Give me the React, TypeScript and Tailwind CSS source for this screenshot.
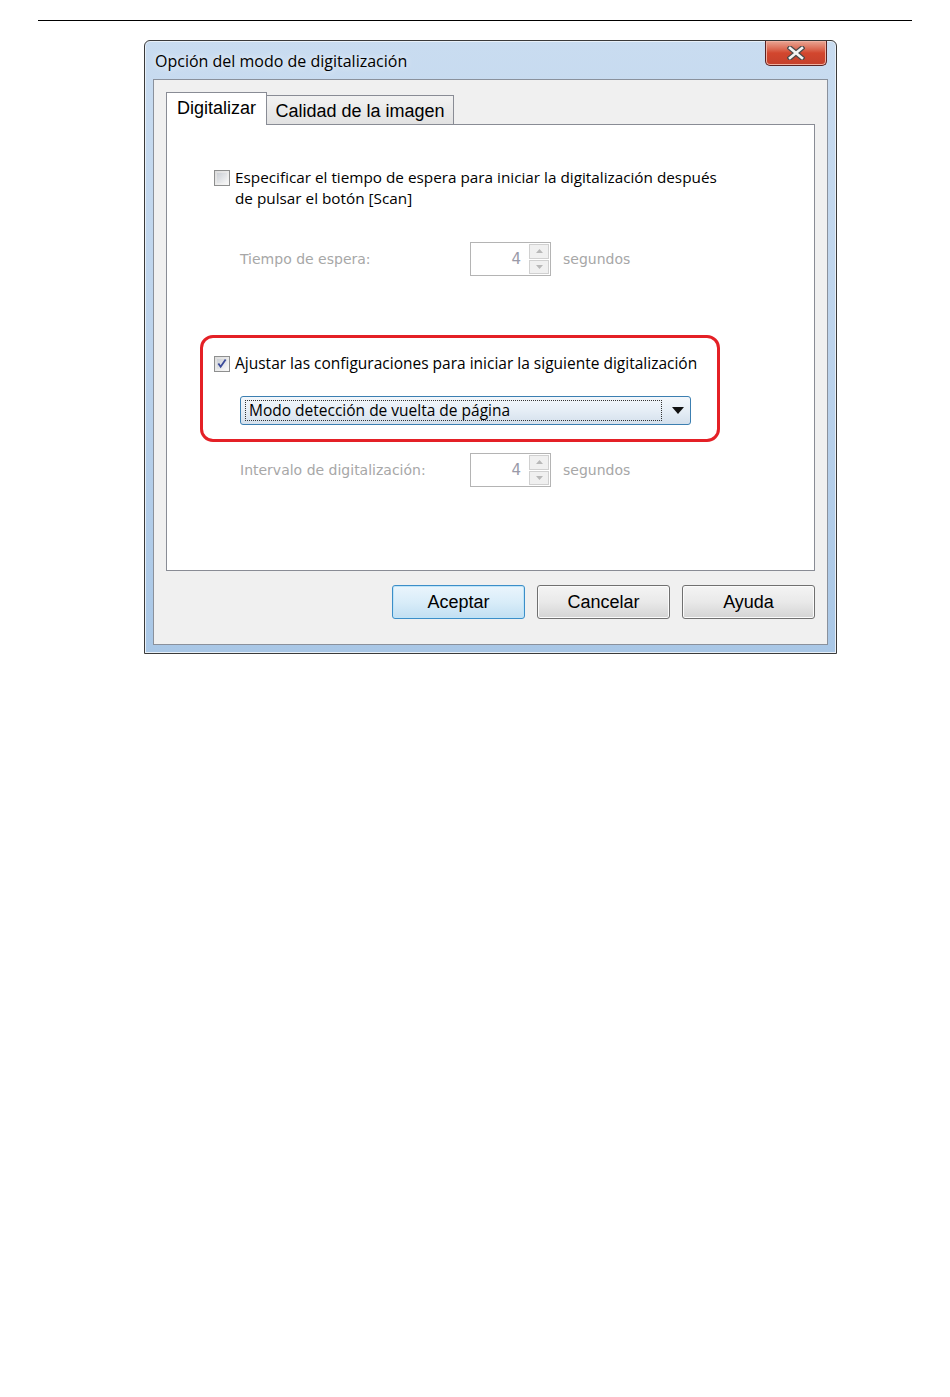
import { ReactNode } from "react"

const ui = { fontFamily: '"Open Sans", "Noto Sans", sans-serif' }
const dim = { fontFamily: '"DejaVu Sans", "Noto Sans", sans-serif' }
const classic = { fontFamily: '"Liberation Sans", Arial, sans-serif' }

function Checkbox({ checked }: { checked?: boolean }) {
  return (
    <div className="w-[16px] h-[16px] shrink-0 border border-[#8e8f8f] bg-gradient-to-br from-[#dcdcdc] to-[#f8f8f8] p-[2px]">
      <div className="w-full h-full bg-gradient-to-br from-[#cbcfd5] to-[#f6f6f6] flex items-center justify-center">
        {checked && (
          <svg width="11" height="11" viewBox="0 0 11 11">
            <path d="M1.5 5.5 L4 9 L9.5 1" fill="none" stroke="#3a4a9a" strokeWidth="2" />
          </svg>
        )}
      </div>
    </div>
  )
}

function Spinner() {
  return (
    <div className="w-[81px] h-[34px] border border-[#b4b4b4] bg-white flex items-center">
      <div className="flex-1 text-right pr-[8px] text-[15px] text-[#9a9aa8]" style={dim}>4</div>
      <div className="w-[20px] h-[30px] mr-[1px] flex flex-col gap-[1px]">
        <div className="flex-1 border border-[#d0d0d0] bg-[#f0f0f0] flex items-center justify-center">
          <svg width="7" height="4" viewBox="0 0 7 4"><path d="M0 4 L3.5 0 L7 4 Z" fill="#b8b8b8" /></svg>
        </div>
        <div className="flex-1 border border-[#d0d0d0] bg-[#f0f0f0] flex items-center justify-center">
          <svg width="7" height="4" viewBox="0 0 7 4"><path d="M0 0 L3.5 4 L7 0 Z" fill="#b8b8b8" /></svg>
        </div>
      </div>
    </div>
  )
}

function SpinRow({ label, className }: { label: string; className?: string }) {
  return (
    <div className={`flex items-center ${className ?? ""}`}>
      <div className="w-[230px] text-[14px] text-[#a7a7a7]" style={dim}>{label}</div>
      <Spinner />
      <div className="ml-[12px] text-[14px] text-[#a7a7a7]" style={dim}>segundos</div>
    </div>
  )
}

function Button({ children, primary }: { children: ReactNode; primary?: boolean }) {
  return (
    <div
      className={`w-[133px] h-[34px] rounded-[3px] border flex items-center justify-center text-[18px] text-black ${
        primary
          ? "border-[#3c8ec8] bg-gradient-to-b from-[#eaf5fc] via-[#d9edf9] to-[#c2dff2] shadow-[inset_0_0_0_1px_#bfe4f8]"
          : "border-[#707070] bg-gradient-to-b from-[#f4f4f4] via-[#e9e9e9] to-[#d4d4d4] shadow-[inset_0_0_0_1px_#fbfbfb]"
      }`}
      style={classic}
    >
      {children}
    </div>
  )
}

export default function App() {
  return (
    <div className="min-h-screen bg-white pt-[20px]">
      <div className="mx-[38px] h-[1px] bg-black" />

      {/* Dialog window */}
      <div className="ml-[144px] mt-[19px] w-[693px] h-[614px] border border-[#3a3a3a] rounded-t-[6px] bg-gradient-to-b from-[#c9dcf0] via-[#bcd3ec] to-[#a9c7e6] flex flex-col shadow-[inset_0_0_0_1px_#e8f0f8]">
        {/* Title bar */}
        <div className="h-[38px] flex items-start justify-between pl-[10px] pr-[9px]">
          <div className="pt-[8px] text-[16px] text-black [text-shadow:0_0_6px_#ffffff]" style={ui}>
            Opción del modo de digitalización
          </div>
          <div className="w-[62px] h-[25px] rounded-b-[5px] border border-[#5a2323] border-t-0 bg-gradient-to-b from-[#e8a594] via-[#d2462e] to-[#c4402c] flex items-center justify-center shadow-[inset_0_0_0_1px_#f0b0a0]">
            <svg width="18" height="14" viewBox="0 0 18 14">
              <path d="M3 2 L15 12 M15 2 L3 12" stroke="#4a4a4a" strokeWidth="5" strokeLinecap="square" />
              <path d="M3 2 L15 12 M15 2 L3 12" stroke="#f4f4f4" strokeWidth="2.6" strokeLinecap="square" />
            </svg>
          </div>
        </div>

        {/* Client area */}
        <div className="mx-[8px] mb-[8px] flex-1 border border-[#8a919c] bg-[#f0f0f0] flex flex-col px-[12px] pt-[11px]">
          {/* Tabs */}
          <div className="flex items-end h-[33px]">
            <div className="w-[101px] h-[33px] border border-[#898c95] border-b-0 bg-white flex items-center justify-center text-[18px] text-black relative z-10 -mb-px pb-[2px]" style={classic}>
              Digitalizar
            </div>
            <div className="w-[187px] h-[29px] border border-[#898c95] border-l-0 border-b-0 bg-gradient-to-b from-[#f2f2f2] to-[#e2e2e2] flex items-center justify-center text-[18px] text-black pt-[2px]" style={classic}>
              Calidad de la imagen
            </div>
          </div>

          {/* Tab panel */}
          <div className="h-[447px] border border-[#898c95] bg-white pl-[47px] pt-[45px]">
            <div className="flex gap-[5px] items-start">
              <Checkbox />
              <div className="text-[15.3px] leading-[21px] text-black -mt-[3px]" style={ui}>
                Especificar el tiempo de espera para iniciar la digitalización después
                <br />
                de pulsar el botón [Scan]
              </div>
            </div>

            <SpinRow label="Tiempo de espera:" className="ml-[26px] mt-[33px]" />

            {/* Highlighted group */}
            <div className="-ml-[14px] mt-[59px] w-[520px] h-[107px] border-[3px] border-[#e42026] rounded-[13px] pl-[11px] pt-[14px]">
              <div className="flex gap-[5px] items-center">
                <Checkbox checked />
                <div className="text-[15.5px] text-black" style={ui}>
                  Ajustar las configuraciones para iniciar la siguiente digitalización
                </div>
              </div>
              <div className="ml-[26px] mt-[21px] w-[451px] h-[29px] rounded-[3px] border border-[#3c7fb1] bg-gradient-to-b from-[#f3f7fb] via-[#e6eef6] to-[#d4e0ec] flex items-center pl-[4px] pr-[6px]">
                <div className="flex-1 h-[21px] border border-dotted border-[#333333] flex items-center pl-[3px] text-[15.5px] text-black" style={ui}>
                  Modo detección de vuelta de página
                </div>
                <svg className="ml-[10px]" width="12" height="7" viewBox="0 0 12 7">
                  <path d="M0 0 L12 0 L6 7 Z" fill="#111111" />
                </svg>
              </div>
            </div>

            <SpinRow label="Intervalo de digitalización:" className="ml-[26px] mt-[11px]" />
          </div>

          {/* Buttons */}
          <div className="flex justify-end gap-[12px] mt-[14px]">
            <Button primary>Aceptar</Button>
            <Button>Cancelar</Button>
            <Button>Ayuda</Button>
          </div>
        </div>
      </div>
    </div>
  )
}
